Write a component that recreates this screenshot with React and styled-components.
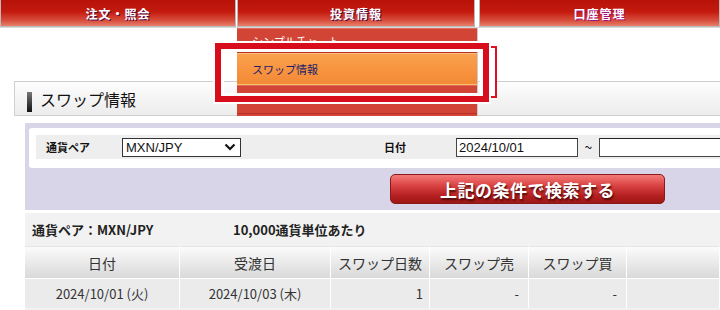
import React from 'react';
import styled, { createGlobalStyle } from 'styled-components';

const GlobalStyle = createGlobalStyle`
  body {
    margin: 0;
    background: #fff;
    font-family: "Noto Sans CJK JP", "Noto Sans", sans-serif;
  }
`;

const Page = styled.div`
  position: relative;
  width: 720px;
  height: 310px;
  overflow: hidden;
  background: #fff;
`;

const NavBar = styled.div`
  display: flex;
  height: 28px;
  border-bottom: 1px solid #d8d8d8;
  box-sizing: border-box;
`;

const NavTab = styled.div`
  width: ${p => p.w}px;
  margin-right: ${p => p.gap || 0}px;
  height: 27px;
  box-sizing: border-box;
  border: 1px solid #bbb;
  border-top: none;
  background: linear-gradient(#b81208 0%, #c41a0e 45%, #d8503e 80%, #e8806c 100%);
  display: flex;
  align-items: center;
  justify-content: center;
  color: #fff;
  font-size: 12px;
  font-weight: bold;
  text-shadow: 1px 1px 0 ${p => p.shadow || '#50104a'};
  letter-spacing: 1px;
`;

const TitleBar = styled.div`
  margin: 53px 0 0 14px;
  height: 35px;
  box-sizing: border-box;
  border: 1px solid #cfcfcf;
  border-right: none;
  background: linear-gradient(#fdfdfd, #ececec);
  display: flex;
  align-items: center;
  padding-left: 12px;
  gap: 8px;
  font-size: 16px;
  color: #111;
`;

const TitleMark = styled.span`
  width: 5px;
  height: 20px;
  margin-top: 6px;
  background: linear-gradient(#777, #111);
`;

const SearchPanel = styled.div`
  margin: 7px 0 0 25px;
  height: 87px;
  background: #d8d5e8;
  padding: 5px 0 0 4px;
  box-sizing: border-box;
`;

const SearchBox = styled.div`
  background: #fff;
  border-radius: 3px 0 0 3px;
  height: 40px;
  padding: 7px 0 0 7px;
  box-sizing: border-box;
`;

const SearchRow = styled.div`
  display: flex;
  align-items: center;
  height: 24px;
  background: #eeeeee;
  font-size: 11px;
  font-weight: bold;
  color: #111;
`;

const Label = styled.span`
  width: ${p => p.w}px;
  padding-left: 10px;
  box-sizing: border-box;
  flex-shrink: 0;
`;

const Select = styled.div`
  width: 119px;
  height: 19px;
  box-sizing: border-box;
  border: 1px solid #333;
  background: #fff;
  display: flex;
  align-items: center;
  justify-content: space-between;
  padding: 0 4px 0 3px;
  font-family: "Liberation Sans", Arial, sans-serif;
  font-size: 13px;
  font-weight: normal;
  margin-right: 133px;
  flex-shrink: 0;
`;

const Input = styled.div`
  width: ${p => p.w}px;
  height: 19px;
  box-sizing: border-box;
  border: 1px solid #444;
  border-top-color: #222;
  background: #fff;
  padding-left: 2px;
  font-family: "Liberation Sans", Arial, sans-serif;
  font-size: 13px;
  font-weight: normal;
  line-height: 17px;
  flex-shrink: 0;
`;

const Tilde = styled.span`
  width: 21px;
  flex-shrink: 0;
  text-align: center;
  font-weight: normal;
  font-size: 14px;
`;

const ButtonRow = styled.div`
  display: flex;
  padding: 6px 0 0 361px;
`;

const SearchButton = styled.div`
  width: 275px;
  height: 30px;
  box-sizing: border-box;
  border: 1px solid #8a1a1a;
  border-radius: 5px;
  background: linear-gradient(#f37a78 0%, #d84040 40%, #b51f1f 75%, #9e1616 100%);
  color: #fff;
  font-size: 17px;
  font-weight: bold;
  display: flex;
  align-items: center;
  justify-content: center;
  letter-spacing: 0.5px;
  text-shadow: 1px 2px 2px #4a0a0a;
`;

const Results = styled.div`
  margin: 3px 0 0 25px;
  background: #f2f2f2;
  height: 100px;
`;

const Summary = styled.div`
  display: flex;
  height: 33px;
  align-items: center;
  padding-left: 7px;
  font-size: 13px;
  font-weight: bold;
  color: #222;
`;

const SummaryPair = styled.span`
  width: 201px;
`;

const Table = styled.div`
  display: grid;
  grid-template-columns: 155px 151px 99px 99px 98px 1fr;
`;

const HeadCell = styled.div`
  height: 32px;
  box-sizing: border-box;
  background: linear-gradient(#fbfbfb, #d9d9d9);
  border-right: 1px solid #fff;
  border-top: 1px solid #e4e4e4;
  display: flex;
  align-items: center;
  justify-content: center;
  font-size: 14px;
  color: #333;
`;

const Cell = styled.div`
  height: 30px;
  box-sizing: border-box;
  background: #ebebeb;
  border-right: 1px solid #fff;
  border-top: 1px solid #fff;
  display: flex;
  align-items: center;
  justify-content: ${p => (p.right ? 'flex-end' : 'center')};
  padding-right: ${p => p.pr || 0}px;
  font-size: 13px;
  color: #333;
`;

const Dropdown = styled.div`
  position: absolute;
  left: 237px;
  top: 28px;
  width: 240px;
  height: 88px;
  background: #d24436;
  border-right: 1px solid #ccc;
`;

const MenuItem = styled.div`
  height: ${p => p.h}px;
  box-sizing: border-box;
  display: flex;
  align-items: center;
  padding-left: 15px;
  font-size: 11px;
  color: ${p => (p.active ? '#1c1c6a' : '#fff')};
  background: ${p => (p.active ? 'linear-gradient(#f9a24e, #f7923e 60%, #f28a38)' : 'transparent')};
  border-top: 1px solid ${p => (p.active ? '#fbc080' : '#e06a58')};
  border-bottom: 1px solid ${p => (p.active ? '#f7c26a' : '#b83024')};
`;

const Highlight = styled.div`
  position: absolute;
  left: 215px;
  top: 43px;
  width: 274px;
  height: 59px;
  box-sizing: border-box;
  border: 6px solid #d80d1c;
  box-shadow: 0 0 0 2px #fff, inset 0 0 0 3px #fff;
`;

const HighlightEcho = styled.div`
  position: absolute;
  left: 491px;
  top: 46px;
  width: 6px;
  height: 52px;
  box-sizing: border-box;
  border: 2px solid #e01020;
  border-left: none;
  background: #fff;
`;

export default function App() {
  return (
    <Page>
      <GlobalStyle />
      <NavBar>
        <NavTab w={236} gap={1}>注文・照会</NavTab>
        <NavTab w={238} gap={4}>投資情報</NavTab>
        <NavTab w={241} shadow="#a01080">口座管理</NavTab>
      </NavBar>

      <TitleBar>
        <TitleMark />
        スワップ情報
      </TitleBar>

      <SearchPanel>
        <SearchBox>
          <SearchRow>
            <Label w={86}>通貨ペア</Label>
            <Select>
              MXN/JPY
              <svg width="12" height="8" viewBox="0 0 12 8">
                <path d="M1.5 1.5 L6 6 L10.5 1.5" fill="none" stroke="#111" strokeWidth="2.2" />
              </svg>
            </Select>
            <Label w={82}>日付</Label>
            <Input w={122}>2024/10/01</Input>
            <Tilde>~</Tilde>
            <Input w={140} />
          </SearchRow>
        </SearchBox>
        <ButtonRow>
          <SearchButton>上記の条件で検索する</SearchButton>
        </ButtonRow>
      </SearchPanel>

      <Results>
        <Summary>
          <SummaryPair>通貨ペア：MXN/JPY</SummaryPair>
          10,000通貨単位あたり
        </Summary>
        <Table>
          <HeadCell>日付</HeadCell>
          <HeadCell>受渡日</HeadCell>
          <HeadCell>スワップ日数</HeadCell>
          <HeadCell>スワップ売</HeadCell>
          <HeadCell>スワップ買</HeadCell>
          <HeadCell />
          <Cell>2024/10/01 (火)</Cell>
          <Cell>2024/10/03 (木)</Cell>
          <Cell right pr={6}>1</Cell>
          <Cell right pr={9}>-</Cell>
          <Cell right pr={9}>-</Cell>
          <Cell />
        </Table>
      </Results>

      <Dropdown>
        <MenuItem h={25}>シンプルチャート</MenuItem>
        <MenuItem h={32} active>スワップ情報</MenuItem>
        <MenuItem h={29} />
      </Dropdown>
      <Highlight />
      <HighlightEcho />
    </Page>
  );
}
